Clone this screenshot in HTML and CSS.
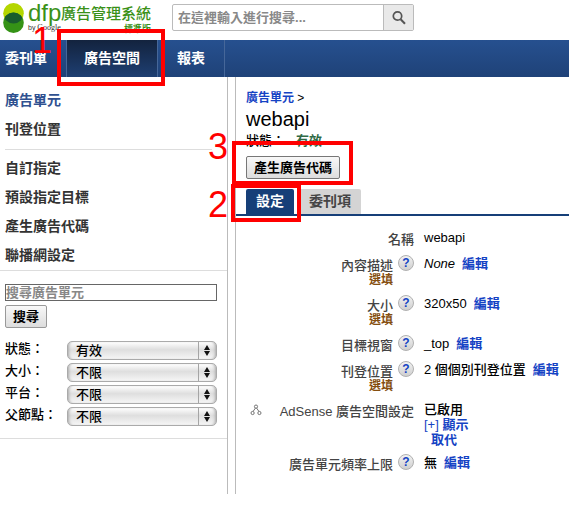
FILE: index.html
```html
<!DOCTYPE html>
<html lang="zh-Hant">
<head>
<meta charset="utf-8">
<meta name="viewport" content="width=device-width, initial-scale=1">
<title>dfp 廣告管理系統</title>
<link rel="stylesheet" href="styles.css">
</head>
<body>
<div class="page">
  <header class="top">
    <a class="brand" href="#">
      <svg class="brand-mark" width="21" height="30" viewBox="0 0 21 30" aria-hidden="true">
        <defs><clipPath id="upper"><circle cx="10.5" cy="10.3" r="10.3"/></clipPath></defs>
        <circle cx="10.5" cy="10.3" r="10.3" fill="#b4d600"/>
        <circle cx="10.5" cy="19.7" r="10.3" fill="#359316"/>
        <circle cx="10.5" cy="19.7" r="10.3" fill="#195c2d" clip-path="url(#upper)"/>
      </svg>
      <span class="brand-word"><span class="dfp">dfp</span><span class="by">by <span class="google">Google</span></span></span>
      <span class="brand-title"><span class="product">廣告管理系統</span><span class="edition">標準版</span></span>
    </a>
    <form class="site-search">
      <input type="text" aria-label="搜尋" placeholder="在這裡輸入進行搜尋...">
      <button type="button" aria-label="搜尋">
        <svg width="16" height="16" viewBox="0 0 16 16" aria-hidden="true"><circle cx="6.5" cy="6" r="4.2" fill="none" stroke="#555" stroke-width="1.7"/><path d="M9.6 9.2L14 13.8" stroke="#555" stroke-width="2"/></svg>
      </button>
    </form>
  </header>

  <nav class="main-nav">
    <a href="#">委刊單</a>
    <div class="marked current">
      <a href="#" aria-current="page">廣告空間</a>
      <span class="mark mark-one"><b>1</b></span>
    </div>
    <a href="#">報表</a>
  </nav>

  <div class="body">
    <aside class="sidebar">
      <nav class="side-nav">
        <ul>
          <li><a class="selected" href="#">廣告單元</a></li>
          <li><a href="#">刊登位置</a></li>
        </ul>
        <hr>
        <ul>
          <li><a href="#">自訂指定</a></li>
          <li><a href="#">預設指定目標</a></li>
          <li><a href="#">產生廣告代碼</a></li>
          <li><a href="#">聯播網設定</a></li>
        </ul>
      </nav>
      <form class="filter">
        <input class="unit-search" type="text" aria-label="搜尋廣告單元" placeholder="搜尋廣告單元">
        <button class="btn" type="button">搜尋</button>
        <div class="filter-rows">
          <label for="f-status">狀態：</label>
          <div class="pick"><select id="f-status"><option>有效</option></select><svg width="18" height="17" viewBox="0 0 18 17" aria-hidden="true"><path d="M.5 0V17" stroke="#a5a5a5"/><path d="M9 3L12 8H6zM9 14L12 9H6z" fill="#111"/></svg></div>
          <label for="f-size">大小：</label>
          <div class="pick"><select id="f-size"><option>不限</option></select><svg width="18" height="17" viewBox="0 0 18 17" aria-hidden="true"><path d="M.5 0V17" stroke="#a5a5a5"/><path d="M9 3L12 8H6zM9 14L12 9H6z" fill="#111"/></svg></div>
          <label for="f-platform">平台：</label>
          <div class="pick"><select id="f-platform"><option>不限</option></select><svg width="18" height="17" viewBox="0 0 18 17" aria-hidden="true"><path d="M.5 0V17" stroke="#a5a5a5"/><path d="M9 3L12 8H6zM9 14L12 9H6z" fill="#111"/></svg></div>
          <label for="f-parent">父節點：</label>
          <div class="pick"><select id="f-parent"><option>不限</option></select><svg width="18" height="17" viewBox="0 0 18 17" aria-hidden="true"><path d="M.5 0V17" stroke="#a5a5a5"/><path d="M9 3L12 8H6zM9 14L12 9H6z" fill="#111"/></svg></div>
        </div>
      </form>
    </aside>

    <main class="content">
      <div class="head">
        <div class="crumb"><a href="#">廣告單元</a> &gt;</div>
        <h1>webapi</h1>
        <div class="status"><span>狀態：</span><span class="active">有效</span></div>
        <div class="marked">
          <button class="btn" type="button">產生廣告代碼</button>
          <span class="mark mark-three"><b>3</b></span>
        </div>
      </div>
      <div class="tabs">
        <div class="marked">
          <button class="tab tab-on" type="button">設定</button>
          <span class="mark mark-two"><b>2</b></span>
        </div>
        <button class="tab" type="button">委刊項</button>
      </div>
      <dl class="fields">
        <dt><span>名稱</span></dt>
        <dd>webapi</dd>

        <dt><span>內容描述<small>選填</small></span><button class="help" type="button">?</button></dt>
        <dd><em>None</em><a href="#">編輯</a></dd>

        <dt><span>大小<small>選填</small></span><button class="help" type="button">?</button></dt>
        <dd>320x50<a href="#">編輯</a></dd>

        <dt><span>目標視窗</span><button class="help" type="button">?</button></dt>
        <dd>_top<a href="#">編輯</a></dd>

        <dt><span>刊登位置<small>選填</small></span><button class="help" type="button">?</button></dt>
        <dd>2 個個別刊登位置<a href="#">編輯</a></dd>

        <dt><svg class="tree" width="12" height="12" viewBox="0 0 12 12" aria-hidden="true"><g fill="#fff" stroke="#666" stroke-width=".9"><path d="M5.5 4L3 7.5M6.5 4L9 7.5"/><circle cx="6" cy="2.6" r="1.6"/><circle cx="2.6" cy="9" r="1.6"/><circle cx="9.4" cy="9" r="1.6"/></g></svg><span>AdSense 廣告空間設定</span></dt>
        <dd>已啟用<a class="override" href="#"><i>[+]</i> 顯示<span>取代</span></a></dd>

        <dt><span>廣告單元頻率上限</span><button class="help" type="button">?</button></dt>
        <dd>無<a href="#">編輯</a></dd>
      </dl>
    </main>
  </div>
</div>
</body>
</html>
```
FILE: styles.css
```css
* { box-sizing: border-box; }

body {
  margin: 0;
  background: #fff;
  color: #000;
  font: 500 13px/15px "Liberation Sans", "Noto Sans CJK TC", sans-serif;
}

a { color: #1543c4; text-decoration: none; }
button, input, select { margin: 0; font: inherit; color: inherit; }
ul, dl, dd, h1 { margin: 0; padding: 0; }
ul { list-style: none; }

.page { margin-right: 17px; }

/* Header */
.top { display: flex; align-items: flex-start; gap: 20px; height: 40px; padding: 3px 3px 0; }
.brand { display: flex; flex: none; color: #3a9118; }
.brand-mark { flex: none; }
.brand-word { display: flex; flex-direction: column; width: 32px; margin-left: 4px; white-space: nowrap; }
.dfp { font-size: 24px; line-height: 20px; }
.by { color: #333; font-size: 7px; line-height: 10px; }
.google { font-family: "Liberation Serif", serif; font-size: 8px; }
.brand-title { display: flex; flex-direction: column; align-items: flex-end; padding: 1px 0 0 1px; }
.product { font-size: 15px; line-height: 20px; }
.edition { font-size: 9px; line-height: 10px; font-weight: 700; }

.site-search {
  display: flex;
  width: 242px;
  height: 27px;
  margin: 1px 0 0 1px;
  border: 1px solid #bbb;
  border-radius: 2px;
}
.site-search input { flex: 1; min-width: 0; border: 0; padding: 0 5px; background: none; font-weight: 700; }
.site-search input::placeholder { color: #888; opacity: 1; }
.site-search button {
  display: grid;
  place-items: center;
  width: 30px;
  padding: 0;
  border: 0;
  border-left: 1px solid #bbb;
  background: #e9e9e9;
}

/* Navigation bar */
.main-nav { display: flex; height: 37px; background: linear-gradient(#26508f, #1f4278); font-size: 14px; font-weight: 700; }
.main-nav a { display: block; padding: 0 19px; color: #fff; line-height: 37px; }
.main-nav > a:first-child { padding-left: 5px; }
.main-nav > a:last-child { border-right: 1px solid #466799; }
.current { border: solid #466799; border-width: 0 1px; background: linear-gradient(#13233e, #1e3f72); }
.current a { padding: 0 17px; }

/* Red callouts */
.marked { position: relative; width: fit-content; }
.mark { position: absolute; z-index: 1; border: 4px solid #f00; pointer-events: none; }
.mark b { position: absolute; right: 100%; color: #f00; font: 400 36px/36px "Liberation Sans", sans-serif; }
.mark-one { inset: -11px -8px -9px -10px; }
.mark-one b { top: -10px; margin-right: 9px; }
.mark-two { inset: -5px -7px -8px -15px; }
.mark-two b { top: -1px; margin-right: 7px; }
.mark-three { inset: -15px -13px -6px -14px; }
.mark-three b { top: -16px; margin-right: 8px; }

/* Page body */
.body { display: grid; grid-template-columns: 228px 1fr; column-gap: 7px; }
.sidebar { border-right: 1px solid #bbb; }
.side-nav { padding-top: 9px; border-bottom: 1px solid #ddd; font-size: 14px; font-weight: 700; }
.side-nav a { display: block; padding-left: 5px; color: #333; line-height: 29px; }
.side-nav .selected { color: #2f5190; }
.side-nav hr { height: 1px; margin: 5px 15px 4px 5px; border: 0; background: #ddd; }

.filter { padding: 13px 10px 12px 5px; border-bottom: 1px solid #ddd; }
.unit-search { display: block; width: 100%; height: 17px; padding: 0; border: 1px solid #666; font-weight: 700; }
.unit-search::placeholder { color: #888; opacity: 1; }
.btn {
  display: block;
  height: 23px;
  padding: 0 7px;
  border: 1px solid #777;
  border-radius: 2px;
  background: linear-gradient(#f8f8f8, #ddd);
  font-weight: 700;
}
.filter .btn { margin: 4px 0 13px; border-color: #999; }
.filter-rows { display: grid; grid-template-columns: 62px 1fr; row-gap: 3px; }
.pick { position: relative; height: 19px; }
.pick select {
  appearance: none;
  display: block;
  width: 100%;
  height: 19px;
  padding: 0 20px 0 8px;
  border: 1px solid #aaa;
  border-radius: 5px;
  background: linear-gradient(#fff, #dedede 45%, #f6f6f6);
  box-shadow: inset 3px 0 3px -2px #aaa, inset -3px 0 3px -2px #aaa;
  line-height: 17px;
}
.pick svg { position: absolute; top: 1px; right: 1px; pointer-events: none; }

/* Main column */
.content { border-left: 1px solid #bbb; padding: 14px 0 21px; }
.head { padding-left: 10px; }
.crumb { font-size: 12px; }
.crumb a { font-weight: 700; }
h1 { font-size: 20px; line-height: 27px; font-weight: 400; }
.status { display: flex; gap: 11px; margin-bottom: 8px; }
.active { color: #2f6a45; font-weight: 700; }
.tabs { display: flex; gap: 5px; margin-top: 10px; padding-left: 10px; border-bottom: 2px solid #163f78; }
.tab { display: block; height: 25px; padding: 0 10px; border: 0; border-radius: 2px 2px 0 0; background: #d4d4d4; color: #444; font-size: 14px; font-weight: 700; }
.tab-on { background: #163f78; color: #fff; }

.fields { display: grid; grid-template-columns: 168px 1fr; column-gap: 10px; row-gap: 8px; padding: 14px 0 0 10px; }
.fields dt { display: flex; justify-content: flex-end; gap: 5px; min-height: 18px; padding-top: 2px; color: #444; text-align: right; }
.fields small { display: block; color: #854e10; font-size: 12px; font-weight: 700; }
.fields dd a { margin-left: 7px; font-weight: 700; }
.fields dd .override { display: block; margin-left: 0; }
.override i { font-style: normal; font-weight: 400; }
.override span { display: block; padding-left: 7px; }
.tree { margin: 0 auto 0 4px; }
.help {
  width: 16px;
  height: 16px;
  margin-top: -3px;
  padding: 0;
  border: 1px solid #b0b0b0;
  border-radius: 50%;
  background: linear-gradient(#f2f2f2, #cfcfcf);
  color: #1543c4;
  font-size: 12px;
  line-height: 14px;
  font-weight: 700;
}
```
